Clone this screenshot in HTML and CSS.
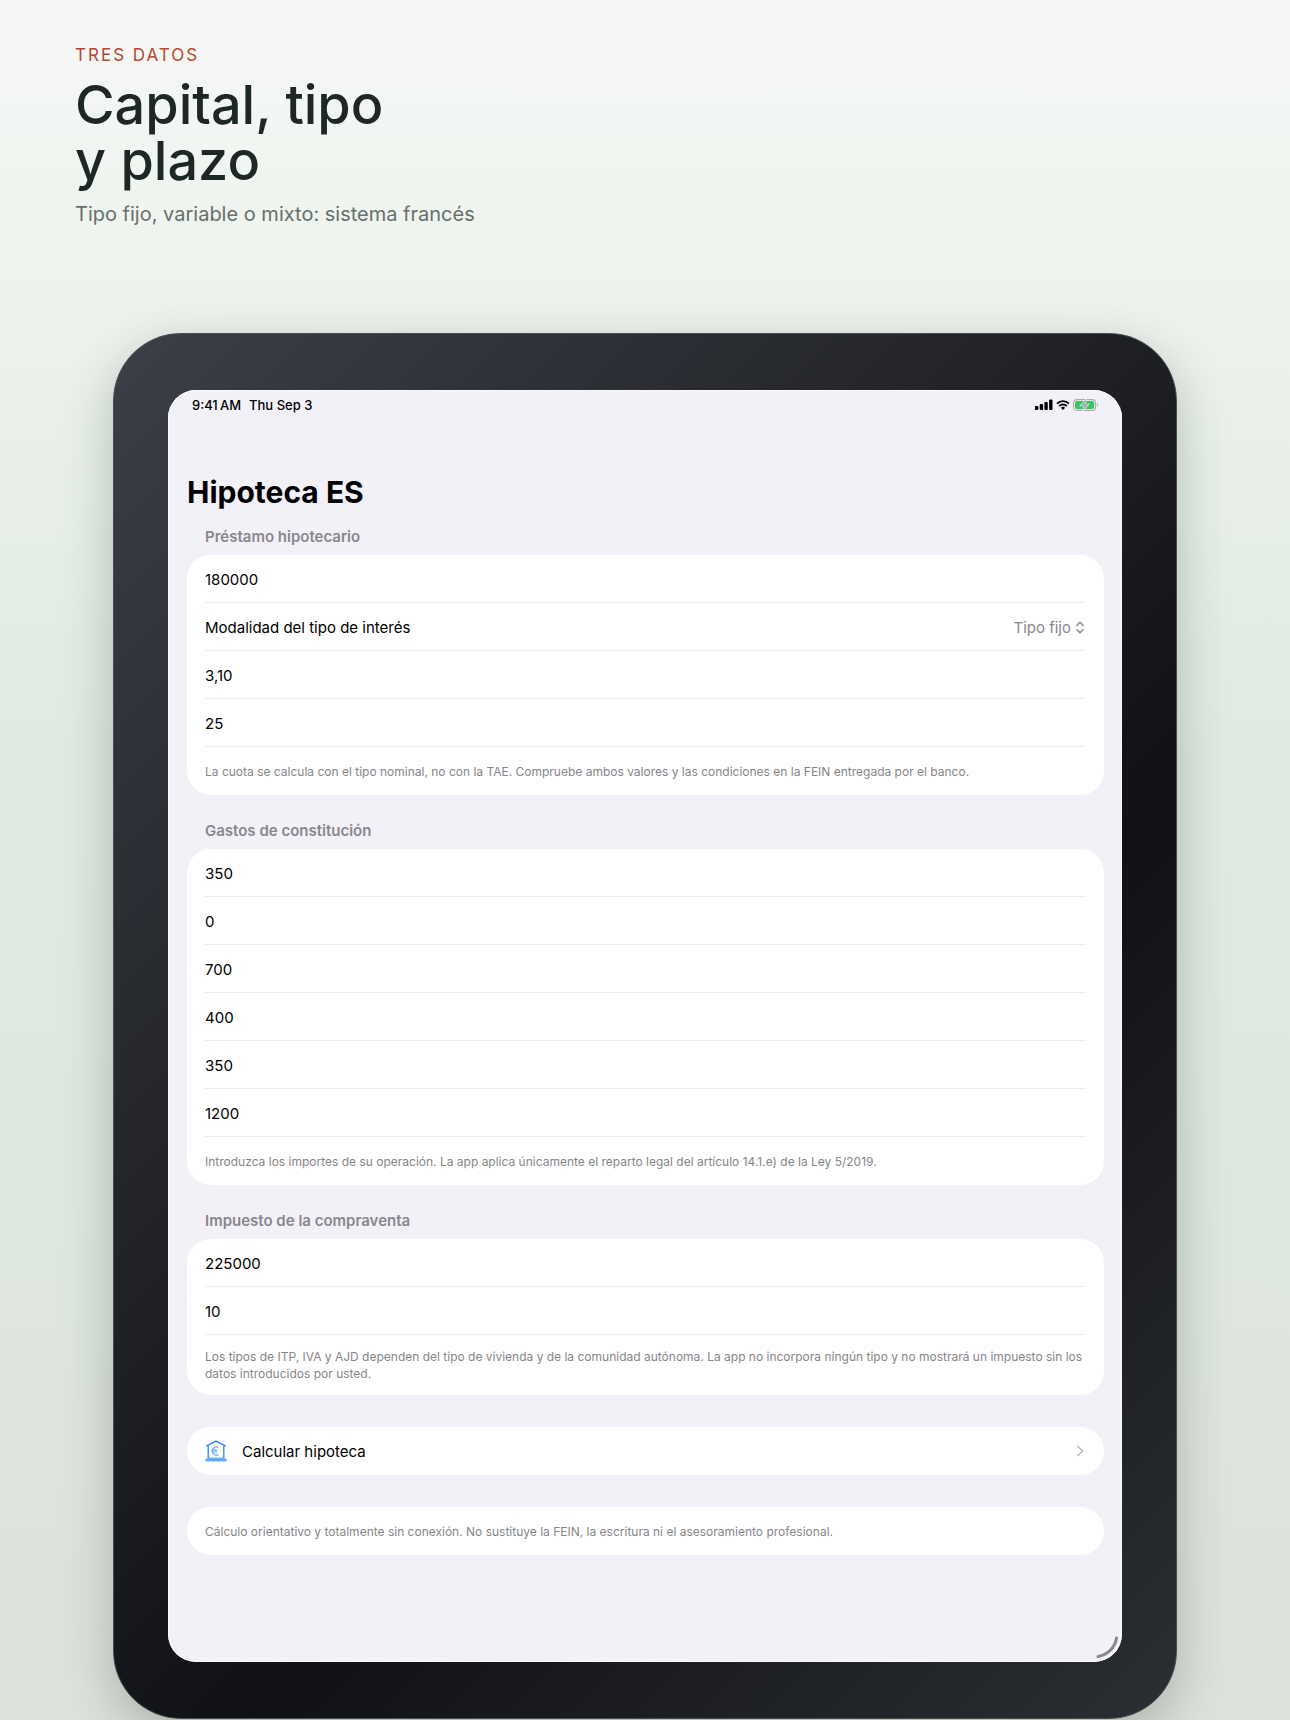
FILE: index.html
```html
<!DOCTYPE html>
<html lang="es">
<head>
    <meta charset="UTF-8">
    <meta name="viewport" content="width=device-width, initial-scale=1.0">
    <title>Hipoteca ES</title>
    <link rel="stylesheet" href="styles.css">
</head>
<body>

<header class="intro">
    <p class="eyebrow">TRES DATOS</p>
    <h1>Capital, tipo<br>y plazo</h1>
    <p class="tagline">Tipo fijo, variable o mixto: sistema francés</p>
</header>

<div class="device">
    <main class="screen">
        <div class="statusBar">
            <span class="clock">9:41&#8201;AM</span>
            <span>Thu Sep 3</span>
            <div class="statusIcons">
                <svg width="18" height="12" viewBox="0 0 18 12">
                    <rect x="0" y="7" width="3.4" height="4" rx="1"/>
                    <rect x="4.7" y="5" width="3.4" height="6" rx="1"/>
                    <rect x="9.4" y="3" width="3.4" height="8" rx="1"/>
                    <rect x="14.1" y="0.5" width="3.4" height="10.5" rx="1"/>
                </svg>
                <svg width="14" height="12" viewBox="0 0 14 12">
                    <path d="M1 4.6a8.6 8.6 0 0 1 12 0M3.2 7a5.4 5.4 0 0 1 7.6 0" fill="none" stroke="#000" stroke-width="1.9"/>
                    <path d="M7 10.9 4.9 8.8a3 3 0 0 1 4.2 0z"/>
                </svg>
                <svg width="26" height="12" viewBox="0 0 26 12">
                    <rect x="0.6" y="0.6" width="22" height="10.8" rx="3.4" fill="none" stroke="#a9a9ae" stroke-width="1.1"/>
                    <rect x="2" y="2" width="19.2" height="8" rx="2.2" fill="#34c759"/>
                    <path d="M24.2 4.2v3.6c1.4-.6 1.4-3 0-3.6z" fill="#a9a9ae"/>
                    <path d="M13 0.6 7.6 6.7h3.2L10 11.4 15.6 5.3h-3.2z" fill="#a9a9ae" stroke="#f2f1f8" stroke-width="1.2" paint-order="stroke"/>
                </svg>
            </div>
        </div>

        <h2 class="appTitle">Hipoteca ES</h2>

        <section>
            <h3>Préstamo hipotecario</h3>
            <div class="card">
                <div class="row"><input type="text" value="180000" aria-label="Capital"></div>
                <div class="row">
                    <label for="modalidad">Modalidad del tipo de interés</label>
                    <select id="modalidad">
                        <option>Tipo fijo</option>
                        <option>Variable</option>
                        <option>Mixto</option>
                    </select>
                    <svg class="updown" width="10" height="13" viewBox="0 0 10 14">
                        <path d="M1.2 5 5 1.4 8.8 5M1.2 9 5 12.6 8.8 9"/>
                    </svg>
                </div>
                <div class="row"><input type="text" value="3,10" aria-label="Tipo nominal"></div>
                <div class="row"><input type="text" value="25" aria-label="Plazo"></div>
                <div class="row"><p class="note">La cuota se calcula con el tipo nominal, no con la TAE. Compruebe ambos valores y las condiciones en la FEIN entregada por el banco.</p></div>
            </div>
        </section>

        <section>
            <h3>Gastos de constitución</h3>
            <div class="card">
                <div class="row"><input type="text" value="350" aria-label="Tasación"></div>
                <div class="row"><input type="text" value="0" aria-label="Comisión"></div>
                <div class="row"><input type="text" value="700" aria-label="Notaría"></div>
                <div class="row"><input type="text" value="400" aria-label="Registro"></div>
                <div class="row"><input type="text" value="350" aria-label="Gestoría"></div>
                <div class="row"><input type="text" value="1200" aria-label="AJD"></div>
                <div class="row"><p class="note">Introduzca los importes de su operación. La app aplica únicamente el reparto legal del artículo 14.1.e) de la Ley 5/2019.</p></div>
            </div>
        </section>

        <section>
            <h3>Impuesto de la compraventa</h3>
            <div class="card">
                <div class="row"><input type="text" value="225000" aria-label="Precio"></div>
                <div class="row"><input type="text" value="10" aria-label="Tipo del impuesto"></div>
                <div class="row"><p class="note">Los tipos de ITP, IVA y AJD dependen del tipo de vivienda y de la comunidad autónoma. La app no incorpora ningún tipo y no mostrará un impuesto sin los datos introducidos por usted.</p></div>
            </div>
        </section>

        <button type="button" class="card calcular">
            <svg width="22" height="22" viewBox="0 0 22 22" fill="none" stroke="#2a8bf2">
                <path d="M1.2 6.2 11 1.2l9.8 5" stroke-width="1.5"/>
                <path d="M3.2 5.8V18M18.8 5.8V18" stroke-width="1.3"/>
                <path d="M2 18.2h18" stroke-width="1"/>
                <path d="M.4 20.2h21.2" stroke="#5aaafa" stroke-width="2.4"/>
                <path d="M13.4 7.6a4 4 0 1 0 0 6.8M7 10.2h5.4M7 12h5" stroke="#5aaafa" stroke-width="1.2"/>
            </svg>
            <span>Calcular hipoteca</span>
            <svg class="chevron" width="8" height="12" viewBox="0 0 8 12">
                <path d="M1.4 1 6.6 6 1.4 11"/>
            </svg>
        </button>

        <div class="card">
            <div class="row"><p class="note">Cálculo orientativo y totalmente sin conexión. No sustituye la FEIN, la escritura ni el asesoramiento profesional.</p></div>
        </div>

        <svg class="corner" width="28" height="28" viewBox="0 0 28 28">
            <path d="M22.5 4A22 22 0 0 1 4 22.5"/>
        </svg>
    </main>
</div>

</body>
</html>
```

FILE: styles.css
```css
* {
    box-sizing: border-box;
}
body {
    margin: 0;
    min-height: 100vh;
    font-family: Inter, "Liberation Sans", sans-serif;
    background: linear-gradient(180deg, #f6f8f5 0%, #dfeae1 45%, #dfe9e0 60%, #dde2db 100%);
}
h1, h2, h3, p {
    margin: 0;
}
.intro {
    padding: 45px 75px 0;
}
.eyebrow {
    font-size: 17px;
    line-height: 20px;
    letter-spacing: 2px;
    color: #b5482f;
}
h1 {
    margin-top: 12px;
    font-size: 54px;
    line-height: 56px;
    font-weight: 500;
    color: #1d2723;
}
.tagline {
    margin-top: 13px;
    font-size: 20px;
    line-height: 24px;
    color: #66706b;
}
.device {
    margin: 107px 113px 0;
    padding: 56px 54px;
    border: 1px solid #4a4d50;
    border-radius: 68px;
    background: linear-gradient(135deg, #3c3f47 0%, #101114 62%, #2b2e33 100%);
    box-shadow: 0 16px 50px rgba(40, 55, 45, 0.28);
}
.screen {
    position: relative;
    padding: 0 18px 107px 19px;
    border-radius: 28px;
    background: #f2f1f8;
    box-shadow: inset 0 0 0 1px #fbfbfe;
}
.statusBar {
    display: flex;
    align-items: center;
    gap: 8px;
    height: 30px;
    padding: 0 5px;
    font-size: 13px;
    font-weight: 500;
}
.statusIcons {
    display: flex;
    gap: 3px;
    margin-left: auto;
}
.appTitle {
    margin-top: 54px;
    font-size: 30px;
    line-height: 36px;
    font-weight: 700;
}
section {
    margin-top: 26px;
}
.appTitle + section {
    margin-top: 17px;
}
h3 {
    padding: 0 18px 8px;
    font-size: 15px;
    line-height: 20px;
    font-weight: 600;
    color: #88878d;
}
.card {
    padding: 0 18px;
    border-radius: 24px;
    background: #fff;
}
.row {
    display: flex;
    align-items: center;
    min-height: 48px;
    padding-top: 1px;
    font-size: 15px;
    border-bottom: 1px solid #ececee;
}
.row:last-child {
    padding-top: 0;
    border-bottom: none;
}
.row input {
    flex: 1;
    padding: 0;
    border: none;
    outline: none;
    background: none;
    font: inherit;
    color: #000;
}
.row select {
    margin-left: auto;
    padding: 0;
    border: none;
    appearance: none;
    field-sizing: content;
    background: none;
    font: inherit;
    color: #88888c;
}
.updown {
    margin: 0 1px 0 4px;
    fill: none;
    stroke: #88888c;
    stroke-width: 1.5;
}
.note {
    padding: 13px 0;
    font-size: 12px;
    line-height: 17px;
    color: #868689;
}
.calcular {
    display: flex;
    align-items: center;
    gap: 15px;
    width: 100%;
    height: 48px;
    margin: 32px 0;
    border: none;
    font: inherit;
    font-size: 15px;
    color: #000;
}
.chevron {
    margin-left: auto;
    margin-right: 2px;
    fill: none;
    stroke: #bcbcc0;
    stroke-width: 1.6;
}
/* resize handle */
.corner {
    position: absolute;
    right: 0;
    bottom: 0;
    fill: none;
    stroke: #88878b;
    stroke-width: 3;
    stroke-linecap: round;
}
```
